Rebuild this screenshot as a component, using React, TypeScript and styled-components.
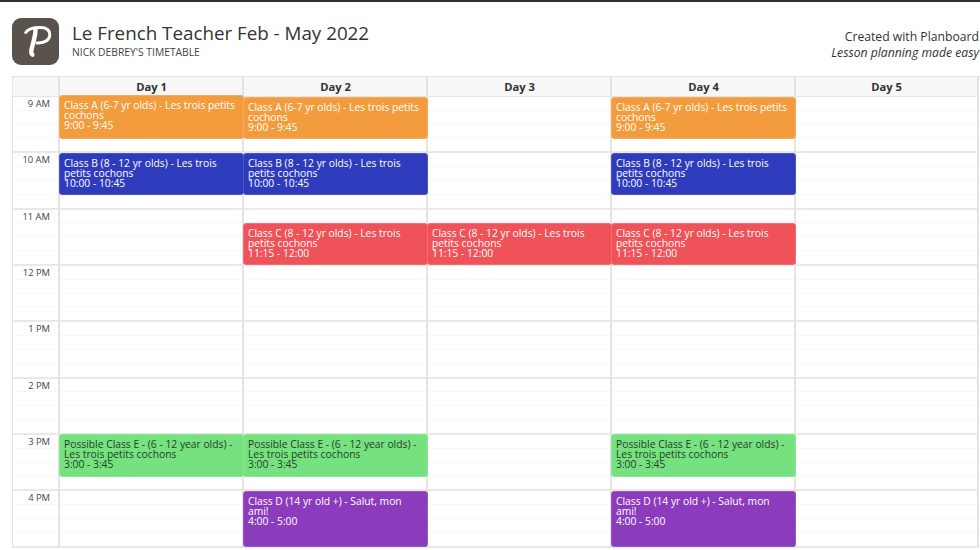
import React from "react";
import styled, { createGlobalStyle } from "styled-components";

const HOUR = 56.33;

const GlobalStyle = createGlobalStyle`
  html, body {
    margin: 0;
    padding: 0;
    background: #fff;
    overflow: hidden;
    font-family: "Open Sans", "Liberation Sans", sans-serif;
  }
`;

const Page = styled.div`
  width: 980px;
  height: 550px;
  overflow: hidden;
  border-top: 2px solid #2e3033;
  box-sizing: border-box;
`;

const Header = styled.header`
  display: flex;
  justify-content: space-between;
  height: 74px;
  padding: 16px 1px 0 12px;
  box-sizing: border-box;
`;

const Brand = styled.div`
  display: flex;
  align-items: flex-start;
  gap: 13px;
`;

const Logo = styled.div`
  width: 47px;
  height: 47px;
  border-radius: 9px;
  background: #5a534b;
  display: flex;
`;

const Titles = styled.div`
  padding-top: 3px;
`;

const Title = styled.h1`
  margin: 0;
  font-size: 18.8px;
  line-height: 25px;
  font-weight: 400;
  color: #333;
`;

const Subtitle = styled.div`
  font-size: 10.3px;
  line-height: 14px;
  margin-top: -1px;
  color: #444;
`;

const Credit = styled.div`
  padding-top: 11px;
  text-align: right;
  font-size: 12.2px;
  line-height: 16px;
  color: #333;
`;

const Tagline = styled.div`
  font-style: italic;
`;

const Calendar = styled.div`
  margin-left: 12px;
  width: 968px;
  display: grid;
  grid-template-columns: 46px repeat(5, 184px);
  border: solid #e4e4e4;
  border-width: 1px 0 0 1px;
  box-sizing: border-box;
`;

const HeadCell = styled.div`
  height: 19px;
  background: #f7f7f7;
  border-left: 2px solid #e4e4e4;
  border-bottom: 1px solid #e4e4e4;
  margin-left: -1px;
  font-size: 11.2px;
  line-height: 19px;
  font-weight: 700;
  text-align: center;
  color: #333;
  &:first-child {
    border-left: 0;
    margin-left: 0;
  }
  &:nth-child(6) {
    border-right: 2px solid #e4e4e4;
  }
`;

const Gutter = styled.div`
  display: flex;
  flex-direction: column;
`;

const Column = styled.div<{ $last?: boolean }>`
  position: relative;
  display: flex;
  flex-direction: column;
  border-left: 2px solid #e4e4e4;
  border-right: ${(p) => (p.$last ? "2px solid #e4e4e4" : "0")};
  margin-left: -1px;
`;

const HourRow = styled.div`
  height: ${HOUR}px;
  box-sizing: border-box;
  border-bottom: 2px solid #e9e9e9;
  display: flex;
  flex-direction: column;
`;

const QuarterLine = styled.div`
  flex: 1;
  border-bottom: 1px dotted #f1f1f1;
  &:last-child {
    border-bottom: 0;
  }
`;

const HourLabel = styled.div`
  position: absolute;
  right: 9px;
  top: 1px;
  font-size: 9.4px;
  line-height: 12px;
  color: #444;
`;

const GutterRow = styled(HourRow)`
  position: relative;
`;

const Event = styled.div<{ $start: number; $hours: number; $color: string; $edge: string; $dark?: boolean }>`
  position: absolute;
  left: -1px;
  right: -1px;
  top: ${(p) => p.$start * HOUR - 0.5}px;
  height: ${(p) => p.$hours * HOUR}px;
  box-sizing: border-box;
  padding: 4px 4px 0;
  border: 1px solid ${(p) => p.$edge};
  border-radius: 3px;
  background: ${(p) => p.$color};
  color: ${(p) => (p.$dark ? "#24402a" : "#fff")};
  font-size: 10.3px;
  line-height: 10px;
  z-index: 1;
`;

const EventTitle = styled.div``;

const EventTime = styled.div``;

const PMark = () => (
  <svg width="47" height="47" viewBox="0 0 47 47" fill="none">
    <path
      d="M13.7 14.5C16 11 22 9.6 28 9.6C34.5 9.6 37.8 12.5 37.8 16.8C37.8 22.5 31.5 25.3 25 25"
      stroke="#fff"
      strokeWidth="3"
      strokeLinecap="round"
    />
    <path
      d="M23.5 12C23.5 18 21 25 19.6 31C19 34 19.3 36 20.4 36.6"
      stroke="#fff"
      strokeWidth="4.4"
      strokeLinecap="round"
    />
  </svg>
);

type Ev = { title: string; time: string; start: number; hours: number; color: string; edge: string; dark?: boolean };

const A: Ev = { title: "Class A (6-7 yr olds) - Les trois petits cochons", time: "9:00 - 9:45", start: 0, hours: 0.75, color: "#f39c3d", edge: "#f5ab5c" };
const B: Ev = { title: "Class B (8 - 12 yr olds) - Les trois petits cochons", time: "10:00 - 10:45", start: 1, hours: 0.75, color: "#2f3bbd", edge: "#4a55c6" };
const C: Ev = { title: "Class C (8 - 12 yr olds) - Les trois petits cochons", time: "11:15 - 12:00", start: 2.25, hours: 0.75, color: "#ef5258", edge: "#f26e73" };
const D: Ev = { title: "Class D (14 yr old +) - Salut, mon ami!", time: "4:00 - 5:00", start: 7, hours: 1, color: "#8a3cbd", edge: "#9b57c7" };
const E: Ev = { title: "Possible Class E - (6 - 12 year olds) - Les trois petits cochons", time: "3:00 - 3:45", start: 6, hours: 0.75, color: "#75e27f", edge: "#8ae692", dark: true };

const days: { name: string; events: Ev[] }[] = [
  // the first block sits a pixel higher than its neighbours in day 2 and 4
  { name: "Day 1", events: [{ ...A, start: -0.02, hours: 0.77 }, B, E] },
  { name: "Day 2", events: [A, B, C, E, D] },
  { name: "Day 3", events: [C] },
  { name: "Day 4", events: [A, B, C, E, D] },
  { name: "Day 5", events: [] },
];

const hours = ["9 AM", "10 AM", "11 AM", "12 PM", "1 PM", "2 PM", "3 PM", "4 PM"];

const Quarters = () => (
  <>
    <QuarterLine />
    <QuarterLine />
    <QuarterLine />
    <QuarterLine />
  </>
);

export default function App() {
  return (
    <>
      <GlobalStyle />
      <Page>
        <Header>
          <Brand>
            <Logo>
              <PMark />
            </Logo>
            <Titles>
              <Title>Le French Teacher Feb - May 2022</Title>
              <Subtitle>NICK DEBREY'S TIMETABLE</Subtitle>
            </Titles>
          </Brand>
          <Credit>
            Created with Planboard
            <Tagline>Lesson planning made easy</Tagline>
          </Credit>
        </Header>
        <Calendar>
          <HeadCell />
          {days.map((d) => (
            <HeadCell key={d.name}>{d.name}</HeadCell>
          ))}
          <Gutter>
            {hours.map((h) => (
              <GutterRow key={h}>
                <HourLabel>{h}</HourLabel>
                <Quarters />
              </GutterRow>
            ))}
          </Gutter>
          {days.map((d, i) => (
            <Column key={d.name} $last={i === days.length - 1}>
              {hours.map((h) => (
                <HourRow key={h}>
                  <Quarters />
                </HourRow>
              ))}
              {d.events.map((e) => (
                <Event key={e.title} $start={e.start} $hours={e.hours} $color={e.color} $edge={e.edge} $dark={e.dark}>
                  <EventTitle>{e.title}</EventTitle>
                  <EventTime>{e.time}</EventTime>
                </Event>
              ))}
            </Column>
          ))}
        </Calendar>
      </Page>
    </>
  );
}
